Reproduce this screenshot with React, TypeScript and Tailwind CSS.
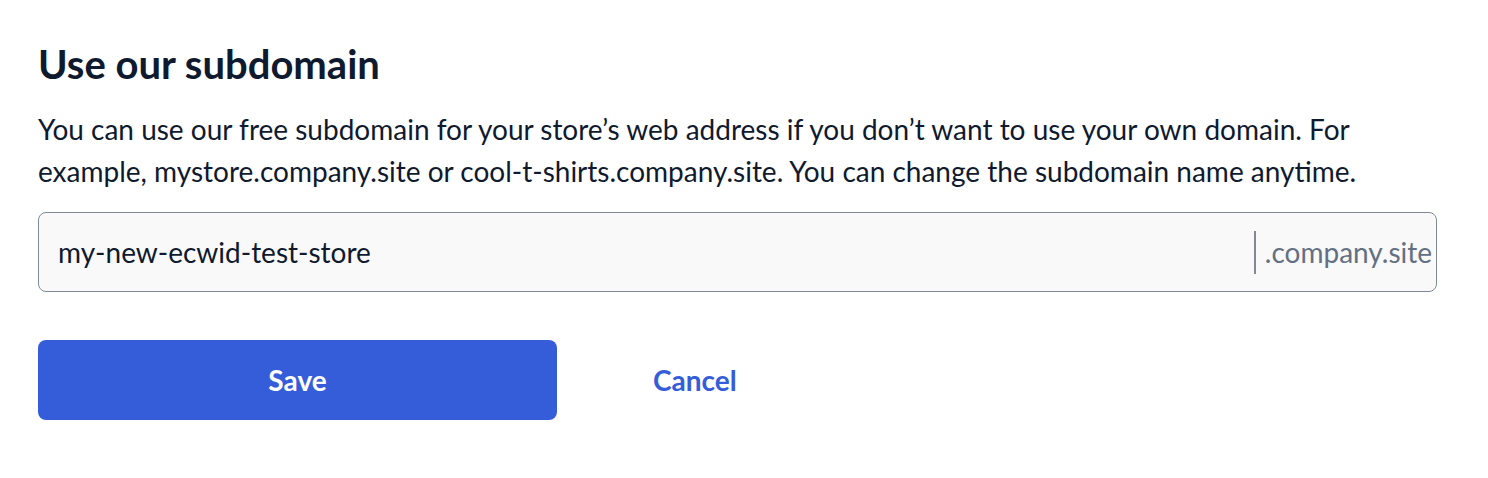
import React, { useState } from 'react';

export default function App() {
  const [subdomain, setSubdomain] = useState('my-new-ecwid-test-store');

  return (
    <div className="min-h-screen bg-white font-['Lato',sans-serif] text-[#0f1a2e]">
      <div className="w-[1399px] ml-[38px] pt-[40px]">
        <h2 className="text-[40px] font-bold leading-[48px]">Use our subdomain</h2>
        <p className="mt-[20px] text-[28px] leading-[42px]">
          You can use our free subdomain for your store’s web address if you don’t want to use your own domain. For
          example, mystore.company.site or cool-t-shirts.company.site. You can change the subdomain name anytime.
        </p>

        <div className="mt-[20px] flex h-[80px] items-center rounded-[8px] border-[1.5px] border-[#7f8a99] bg-[#f9f9f9]">
          <input
            value={subdomain}
            onChange={(e) => setSubdomain(e.target.value)}
            className="h-full min-w-0 flex-1 bg-transparent pl-[19px] text-[28px] text-[#0f1a2e] outline-none"
          />
          <span className="h-[43px] w-[2px] bg-[#7f8a99]" />
          <span className="pl-[9px] pr-[4px] text-[28px] text-[#637083]">.company.site</span>
        </div>

        <div className="mt-[48px] flex items-center">
          <button
            type="button"
            className="h-[80px] w-[519px] rounded-[8px] bg-[#365dd9] text-[28px] font-bold text-white"
          >
            Save
          </button>
          <button type="button" className="ml-[96px] text-[28px] font-bold text-[#365dd9]">
            Cancel
          </button>
        </div>
      </div>
    </div>
  );
}
